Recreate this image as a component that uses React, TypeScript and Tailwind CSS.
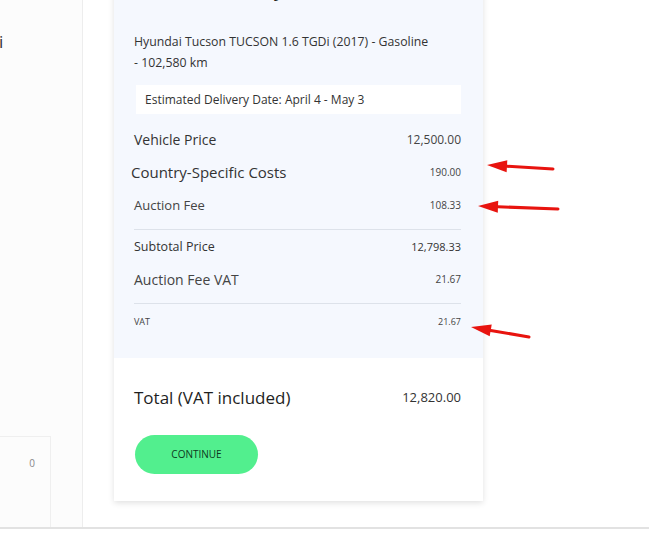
import React from "react";

const font = { fontFamily: '"Open Sans", "Noto Sans", sans-serif' };

function Row({
  label,
  value,
  labelCls,
  valueCls,
  h,
}: {
  label: string;
  value: string;
  labelCls: string;
  valueCls: string;
  h: string;
}) {
  return (
    <div className={`flex items-center justify-between ${h}`}>
      <span className={labelCls}>{label}</span>
      <span className={valueCls}>{value}</span>
    </div>
  );
}

function Arrow({ x1, y1, x2, y2 }: { x1: number; y1: number; x2: number; y2: number }) {
  const ang = Math.atan2(y2 - y1, x2 - x1);
  const len = 20;
  const w = 6;
  const bx = x2 - len * Math.cos(ang);
  const by = y2 - len * Math.sin(ang);
  const px = -Math.sin(ang) * w;
  const py = Math.cos(ang) * w;
  return (
    <g>
      <line x1={x1} y1={y1} x2={bx} y2={by} stroke="#e8140f" strokeWidth={3} strokeLinecap="round" />
      <polygon
        points={`${x2},${y2} ${bx + px},${by + py} ${bx - px},${by - py}`}
        fill="#e8140f"
      />
    </g>
  );
}

export default function App() {
  return (
    <div className="relative flex h-[537px] w-[649px] flex-col overflow-hidden bg-white" style={font}>
      <div className="flex h-[529px] border-b-2 border-[#e2e2e2]">
        <aside className="flex w-[83px] flex-col justify-between overflow-hidden border-r border-[#ededed] bg-[#fcfcfc]">
          <div className="ml-[-1px] mt-[31px] text-[17px] leading-[22px] text-[#333]">i</div>
          <div className="flex h-[91px] w-[51px] justify-end border-t border-r border-[#efefef] bg-[#fcfcfc] pr-[15px] pt-[19px] text-[10px] text-[#888]">
            0
          </div>
        </aside>
        <main className="flex-1 pl-[31px]">
          <div className="mt-[-40px] w-[369px] bg-white shadow-[0_2px_6px_rgba(0,0,0,0.12)]">
            <div className="bg-[#f5f8fe] pl-[20px] pr-[22px] pt-[15px] pb-[18px]">
              <div className="h-[28px] text-[20px] font-medium leading-[28px] text-[#222]">Order Summary</div>
              <div className="mt-[28px] text-[12.3px] leading-[21px] text-[#333]">
                Hyundai Tucson TUCSON 1.6 TGDi (2017) - Gasoline
                <br />- 102,580 km
              </div>
              <div className="ml-[2px] mt-[12px] flex h-[29px] items-center bg-white pl-[9px] text-[12px] text-[#333]">
                Estimated Delivery Date: April 4 - May 3
              </div>
              <div className="mt-[9px]">
                <Row h="h-[33px]" label="Vehicle Price" value="12,500.00" labelCls="text-[14px] text-[#333]" valueCls="text-[12px] text-[#444]" />
                <Row h="h-[33px]" label="Country-Specific Costs" value="190.00" labelCls="ml-[-3px] text-[15px] text-[#333]" valueCls="text-[10px] text-[#444]" />
                <Row h="h-[33px]" label="Auction Fee" value="108.33" labelCls="text-[13px] text-[#444]" valueCls="text-[10px] text-[#444]" />
              </div>
              <div className="mt-[7px] h-px bg-[#dde2ea]" />
              <Row h="h-[34px]" label="Subtotal Price" value="12,798.33" labelCls="text-[12.5px] text-[#333]" valueCls="text-[11px] text-[#333]" />
              <Row h="h-[30px]" label="Auction Fee VAT" value="21.67" labelCls="text-[14px] text-[#444]" valueCls="text-[10px] text-[#444]" />
              <div className="mt-[9px] h-px bg-[#dde2ea]" />
              <Row h="h-[36px]" label="VAT" value="21.67" labelCls="text-[9px] text-[#444]" valueCls="text-[9px] text-[#444]" />
            </div>
            <div className="pl-[20px] pr-[22px] pt-[26px] pb-[27px]">
              <div className="flex h-[28px] items-center justify-between">
                <span className="text-[17px] text-[#1e1e1e]">Total (VAT included)</span>
                <span className="text-[13px] text-[#333]">12,820.00</span>
              </div>
              <button className="ml-[1px] mt-[23px] flex h-[39px] w-[123px] items-center justify-center rounded-full bg-[#52ef8e] text-[10px] font-medium text-[#0c3a1d]">
                CONTINUE
              </button>
            </div>
          </div>
        </main>
      </div>
      <svg className="pointer-events-none absolute left-0 top-0" width={649} height={537}>
        <Arrow x1={553} y1={169} x2={487} y2={165} />
        <Arrow x1={558} y1={209} x2={478} y2={206} />
        <Arrow x1={529} y1={337} x2={471} y2={327} />
      </svg>
    </div>
  );
}
